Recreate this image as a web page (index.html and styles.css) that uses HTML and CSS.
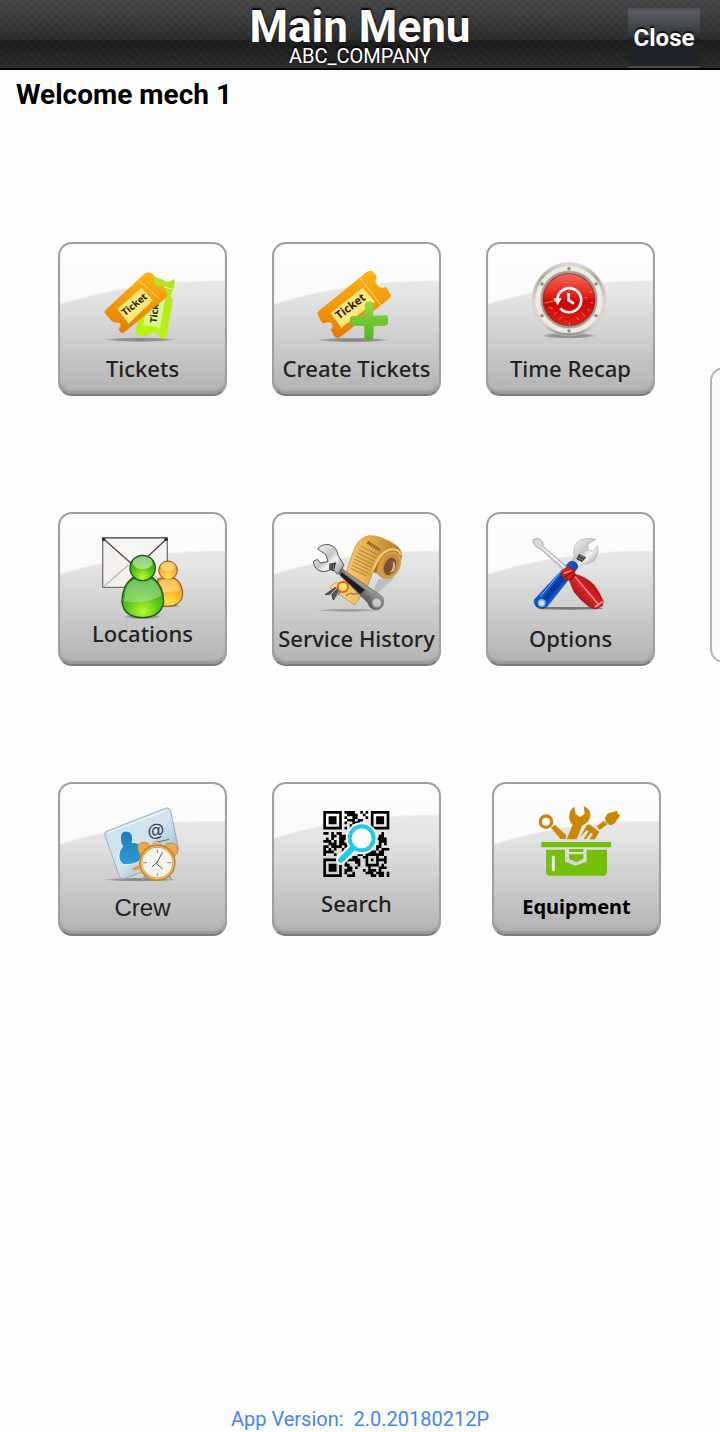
FILE: index.html
```html
<!DOCTYPE html>
<html lang="en">
<head>
  <meta charset="UTF-8">
  <meta name="viewport" content="width=device-width, initial-scale=1.0">
  <title>Main Menu</title>
  <link rel="stylesheet" href="styles.css">
</head>
<body>
  <header class="topbar">
    <div class="heading">
      <h1>Main Menu</h1>
      <p>ABC_COMPANY</p>
    </div>
    <button type="button" class="close">Close</button>
  </header>

  <main>
    <h2 class="welcome">Welcome mech 1</h2>

    <nav class="menu">
      <button type="button" class="tile">
        <svg class="art" viewBox="30 27 495 330" aria-hidden="true">
          <defs>
            <linearGradient id="orange" x1="0" y1="0" x2="0" y2="1">
              <stop offset="0" stop-color="#ffb516"/><stop offset="1" stop-color="#e57b00"/>
            </linearGradient>
            <linearGradient id="lime" x1="0" y1="0" x2="0" y2="1">
              <stop offset="0" stop-color="#b5df2b"/><stop offset="1" stop-color="#b9f50b"/>
            </linearGradient>
            <radialGradient id="shadow">
              <stop offset="0" stop-color="#808080"/><stop offset=".7" stop-color="#999"/><stop offset="1" stop-color="#aaa" stop-opacity="0"/>
            </radialGradient>
          </defs>
          <ellipse cx="270" cy="314" rx="112" ry="7" fill="url(#shadow)"/>
          <path d="M314 125L341 136Q356 146 371 132L374 136L372 160L364 174L363 187L369 194L349 306L344 312L333 309Q326 293 311 294Q298 294 290 301Q280 309 266 300L255 296L290 150Z" fill="url(#lime)"/>
          <path d="M320 180L350 168L330 278L279 270L290 225Z" fill="#dff58c"/>
          <path d="M338 155L371 163" stroke="#e4f79a" stroke-width="3"/>
          <text class="stub" transform="translate(320 265) rotate(-84)">Ticket</text>
          <path d="M167 225L281 119Q292 109 302 115Q313 119 314 128Q305 141 316 151Q326 160 338 153L352 179Q353 185 346 190L224 291Q215 296 209 288Q204 284 211 275Q214 263 203 262Q194 264 184 257L164 233Q164 228 167 225Z" fill="url(#orange)" stroke="#f08d00"/>
          <path d="M202 222L274 159L309 196L236 266Z" fill="#ffe779"/>
          <path d="M263 133L328 191" stroke="#ffd673" stroke-width="3"/>
          <text class="stub" transform="translate(225 244) rotate(-39)">Ticket</text>
        </svg>
        <span class="label">Tickets</span>
      </button>

      <button type="button" class="tile">
        <svg class="art" viewBox="27 27 495 330" aria-hidden="true">
          <defs>
            <linearGradient id="plus" x1="0" y1="0" x2="0" y2="1">
              <stop offset="0" stop-color="#8fdc3d"/><stop offset="1" stop-color="#55b424"/>
            </linearGradient>
          </defs>
          <ellipse cx="265" cy="315" rx="110" ry="7" fill="url(#shadow)"/>
          <path d="M161 229L306 111Q316 106 323 110L331 120Q337 126 331 136Q330 148 342 156Q353 162 363 157L377 180Q378 187 371 192L224 307Q216 312 210 306L198 285Q207 274 200 264Q189 258 179 264Q171 266 168 258L158 236Q157 232 161 229Z" fill="url(#orange)" stroke="#f08d00"/>
          <path d="M197 234L294 158L330 201L229 278Z" fill="#ffe779"/>
          <path d="M286 131L348 210" stroke="#ffe08c" stroke-width="3"/>
          <text class="stub large" transform="translate(222 254) rotate(-37)">Ticket</text>
          <path d="M304 202Q313 196 323 202Q326 205 325 212L325 242L363 241Q369 243 369 250L369 264Q368 271 362 272L326 273L325 307Q324 315 316 315L305 315Q298 314 298 307L298 273L262 272Q255 271 255 264L255 249Q256 244 262 243L299 242L299 211Q299 205 304 202Z" fill="url(#plus)"/>
        </svg>
        <span class="label">Create Tickets</span>
      </button>

      <button type="button" class="tile">
        <svg class="art" viewBox="24 27 495 330" aria-hidden="true">
          <defs>
            <linearGradient id="bezel" x1="0" y1="0" x2="0" y2="1">
              <stop offset="0" stop-color="#e4e1dd"/><stop offset=".2" stop-color="#aaa59c"/><stop offset=".5" stop-color="#ddd8d1"/><stop offset=".85" stop-color="#d9d4cd"/><stop offset="1" stop-color="#8e8a84"/>
            </linearGradient>
            <linearGradient id="dial" x1="0" y1="0" x2="0" y2="1">
              <stop offset="0" stop-color="#f2675b"/><stop offset=".4" stop-color="#e3241b"/><stop offset=".55" stop-color="#c90505"/><stop offset="1" stop-color="#de2019"/>
            </linearGradient>
          </defs>
          <ellipse cx="267" cy="302" rx="85" ry="9" fill="url(#shadow)"/>
          <circle cx="267" cy="193" r="110" fill="url(#bezel)" stroke="#c9c5bf" stroke-width="2"/>
          <circle cx="267" cy="194" r="94" fill="none" stroke="#eeebe6" stroke-width="13"/>
          <circle cx="267" cy="194" r="82" fill="#8b3029" stroke="#a29b91" stroke-width="6"/>
          <circle cx="267" cy="194" r="77" fill="url(#dial)"/>
          <path d="M194 204L225 197M206 217l12 4M218 157l8 5M302 136l4 6M323 153l4 4M329 172l8-3M331 202l8 2M323 221l5 7M304 233l12 12M291 247l5 8M268 262v9M238 253l6-7M222 238l8-6M314 188l8 1" fill="none" stroke="#f07a6a" stroke-width="3"/>
          <g fill="#888">
            <circle cx="267" cy="101" r="5"/><circle cx="186" cy="147" r="5"/><circle cx="348" cy="147" r="5"/>
            <circle cx="186" cy="242" r="5"/><circle cx="348" cy="242" r="5"/><circle cx="267" cy="288" r="5"/>
          </g>
          <path d="M232 191A36 36 0 1 1 241 220M266 174V196L282 206" fill="none" stroke="#fff" stroke-width="8"/>
          <path d="M220 190H245L233 211Z" fill="#fff"/>
        </svg>
        <span class="label">Time Recap</span>
      </button>

      <button type="button" class="tile raised">
        <svg class="art" viewBox="30 27 495 315" aria-hidden="true">
          <defs>
            <radialGradient id="green" cx=".5" cy=".85" r=".8">
              <stop offset="0" stop-color="#b6fa2b"/><stop offset=".5" stop-color="#58c51b"/><stop offset="1" stop-color="#2d9618"/>
            </radialGradient>
            <radialGradient id="amber" cx=".5" cy=".85" r=".8">
              <stop offset="0" stop-color="#ffe34c"/><stop offset=".6" stop-color="#ffaf2c"/><stop offset="1" stop-color="#ee9118"/>
            </radialGradient>
          </defs>
          <path d="M158 99H352V247H158Z" fill="#f3f0ed" stroke="#777" stroke-width="4"/>
          <path d="M160 246L235 180M350 246L284 185" stroke="#bbb" stroke-width="4"/>
          <path d="M160 101L258 188L350 101" fill="#f8f6f4" stroke="#444" stroke-width="4"/>
          <path d="M157 98H352" stroke="#666" stroke-width="4"/>
          <circle cx="161" cy="103" r="5" fill="#222"/><circle cx="348" cy="103" r="5" fill="#222"/>
          <ellipse cx="278" cy="335" rx="60" ry="8" fill="url(#shadow)"/>
          <ellipse cx="350" cy="302" rx="42" ry="6" fill="url(#shadow)"/>
          <path d="M324 222Q352 212 379 222Q398 238 398 270Q394 303 352 304Q317 304 315 272Q313 240 324 222Z" fill="url(#amber)" stroke="#805019" stroke-width="3"/>
          <circle cx="354" cy="196" r="28" fill="url(#amber)" stroke="#805019" stroke-width="3"/>
          <ellipse cx="354" cy="184" rx="21" ry="14" fill="#ffe6a0" opacity=".65"/>
          <path d="M321 258Q347 267 391 256Q387 233 374 224Q352 216 331 227Q321 236 321 258Z" fill="#ffdf8a" opacity=".6"/>
          <path d="M246 219Q278 208 310 219Q340 243 341 290Q335 336 278 338Q220 336 216 289Q217 241 246 219Z" fill="url(#green)" stroke="#205518" stroke-width="4"/>
          <path d="M225 270Q223 240 251 224Q278 215 306 224Q331 240 334 272Q280 300 222 288Z" fill="#b9e8ad" opacity=".5"/>
          <circle cx="278" cy="189" r="38" fill="url(#green)" stroke="#205518" stroke-width="4"/>
          <ellipse cx="278" cy="173" rx="30" ry="19" fill="#d5f3ca" opacity=".6"/>
        </svg>
        <span class="label">Locations</span>
      </button>

      <button type="button" class="tile">
        <svg class="art" viewBox="27 27 495 330" aria-hidden="true">
          <defs>
            <linearGradient id="paper" x1="0" y1="0" x2="1" y2="0">
              <stop offset="0" stop-color="#ffdf93"/><stop offset=".5" stop-color="#e9b34f"/><stop offset="1" stop-color="#b47827"/>
            </linearGradient>
            <linearGradient id="steel" x1="0" y1="0" x2="1" y2="1">
              <stop offset="0" stop-color="#fff"/><stop offset=".45" stop-color="#c6c6c6"/><stop offset=".6" stop-color="#f4f4f4"/><stop offset="1" stop-color="#888"/>
            </linearGradient>
            <linearGradient id="handle" x1="0" y1="1" x2="1" y2="0">
              <stop offset=".3" stop-color="#333"/><stop offset=".55" stop-color="#888"/><stop offset="1" stop-color="#ddd"/>
            </linearGradient>
          </defs>
          <ellipse cx="250" cy="316" rx="100" ry="5" fill="url(#shadow)" opacity=".7"/>
          <path d="M340 222L392 215L310 290Z" fill="#999" opacity=".45"/>
          <path d="M312 92Q350 90 397 124Q418 142 405 171Q394 211 377 219Q350 224 336 204L324 200L306 247L269 300L194 247L209 234L235 232L262 147Q276 99 312 92Z" fill="url(#paper)" stroke="#bd842f" stroke-width="2"/>
          <path d="M324 200Q336 150 372 134Q400 128 407 150" fill="none" stroke="#f0cb7c" stroke-width="6"/>
          <path d="M324 200L336 204Q338 170 352 152Z" fill="#a8702a"/>
          <ellipse cx="377" cy="180" rx="27" ry="38" transform="rotate(22 377 180)" fill="#c78c3c" stroke="#d9a04a" stroke-width="5"/>
          <ellipse cx="375" cy="184" rx="17" ry="27" transform="rotate(22 375 184)" fill="#795033"/>
          <path d="M373 204Q388 190 383 168Q397 178 386 198Z" fill="#d3bb9d"/>
          <path d="M308 112L345 136" stroke="#765a30" stroke-width="9" stroke-dasharray="5 2"/>
          <path d="M288 124L337 149M282 134L333 159M277 144L329 169M272 153L325 179M268 162L321 188M264 171L317 197M261 181L313 207M258 191L306 213" stroke="#a9803d" stroke-width="3"/>
          <path d="M211 247L180 269L200 267L205 285L234 252" fill="#555" stroke="#444" stroke-width="3"/>
          <path d="M215 250L190 275M227 252L211 280" stroke="#ccc" stroke-width="3"/>
          <path d="M244 272q12-11 20-5q14 2 17-7" fill="none" stroke="#a97634" stroke-width="4"/>
          <circle cx="234" cy="246" r="15" fill="#ffe56c" stroke="#ef6411" stroke-width="6"/>
          <path d="M216 188Q230 184 239 197L346 270Q361 282 354 301Q346 317 326 313Q314 311 307 292L224 210Z" fill="url(#handle)" stroke="#666" stroke-width="2"/>
          <path d="M229 201L300 255L285 266L226 211Z" fill="#1d1d1d"/>
          <path d="M240 201L324 264" stroke="#aaa" stroke-width="3"/>
          <circle cx="336" cy="293" r="15" fill="#cacaca" stroke="#888" stroke-width="5"/>
          <path d="M158 132Q170 116 192 119Q216 125 219 151L237 181L218 208L202 191Q178 207 157 194Q145 183 145 169L157 163L167 174L189 170L182 148L171 141Z" fill="url(#steel)" stroke="#555" stroke-width="3"/>
          <path d="M193 176l20-4l-6 27l-14-5Z" fill="#262b31"/><path d="M198 177v17M205 175v20" stroke="#bbb" stroke-width="2"/>
        </svg>
        <span class="label">Service History</span>
      </button>

      <button type="button" class="tile">
        <svg class="art" viewBox="24 27 495 330" aria-hidden="true">
          <defs>
            <linearGradient id="blue" x1="0" y1="0" x2="1" y2="1">
              <stop offset="0" stop-color="#3a86e8"/><stop offset=".5" stop-color="#0750c4"/><stop offset="1" stop-color="#2f78dc"/>
            </linearGradient>
            <linearGradient id="red" x1="0" y1="1" x2="1" y2="0">
              <stop offset=".2" stop-color="#8d0a0e"/><stop offset=".5" stop-color="#d92428"/><stop offset=".8" stop-color="#9d090e"/>
            </linearGradient>
          </defs>
          <path d="M188 306H354L370 312Q270 317 175 312Z" fill="#777"/>
          <path d="M283 157Q276 119 301 105Q325 96 348 103L323 118L325 134L337 139L353 122Q358 147 342 167Q324 180 305 177L292 188L274 170Z" fill="url(#steel)" stroke="#aaa" stroke-width="2"/>
          <path d="M297 147l22 10l-13 15l-17-10Z" fill="#444"/><path d="M296 159l13 7M300 152l12 6" stroke="#aaa" stroke-width="2"/>
          <path d="M268 171Q278 164 289 174Q297 182 291 191L202 304Q191 315 174 308Q160 300 163 284Z" fill="url(#blue)" stroke="#164a9f" stroke-width="2"/>
          <path d="M248 205L188 281L203 286L260 216Z" fill="#063a9c"/>
          <path d="M182 274L249 192" stroke="#7bc0ff" stroke-width="3"/>
          <circle cx="185" cy="294" r="10" fill="#ddd" stroke="#69adf2" stroke-width="4"/>
          <path d="M160 103L175 100L188 111L189 124L260 185L251 194L181 132L166 124L159 112Z" fill="#d8d8d8" stroke="#888" stroke-width="2"/>
          <path d="M185 125L255 188" stroke="#fff" stroke-width="3"/>
          <path d="M246 197L266 184L282 194L285 208Q320 217 342 240Q359 263 370 289L367 303L346 312L330 307Q298 284 281 258L268 226L251 222L243 209Z" fill="url(#red)" stroke="#9e1015" stroke-width="2"/>
          <path d="M285 215L354 297M251 205L275 197" stroke="#ff9a91" stroke-width="4"/>
          <path d="M252 218L277 201M269 227L284 208" stroke="#5c0308" stroke-width="3"/>
          <path d="M345 306L369 289" stroke="#f8a4a0" stroke-width="5"/>
        </svg>
        <span class="label">Options</span>
      </button>

      <button type="button" class="tile">
        <svg class="art" viewBox="30 27 495 330" aria-hidden="true">
          <defs>
            <linearGradient id="card" x1="0" y1="0" x2="1" y2="1">
              <stop offset="0" stop-color="#c5dfee"/><stop offset=".5" stop-color="#d3e4ef"/><stop offset="1" stop-color="#86abc1"/>
            </linearGradient>
            <linearGradient id="person" x1="0" y1="0" x2="0" y2="1">
              <stop offset="0" stop-color="#2479b9"/><stop offset="1" stop-color="#2c9bd6"/>
            </linearGradient>
          </defs>
          <ellipse cx="271" cy="314" rx="112" ry="6" fill="url(#shadow)"/>
          <path d="M164 178Q163 170 172 168L349 99Q359 97 362 107L385 220L365 260L222 311Q214 313 209 306Z" fill="url(#card)" stroke="#94afbd" stroke-width="3"/>
          <path d="M174 173L349 106" stroke="#edf7fc" stroke-width="4"/>
          <path d="M211 191Q210 173 224 168Q241 167 247 181Q250 193 246 203Q263 200 273 215L271 257Q247 272 219 268Q205 258 207 238Q208 224 218 214Q211 205 211 191Z" fill="url(#person)" stroke="#e7f4fa" stroke-width="3"/>
          <text class="at" transform="translate(295 187) rotate(-8)">@</text>
          <path d="M323 201L357 193" stroke="#65747d" stroke-width="3"/>
          <path d="M245 280l24-10l7 8l-25 9Z" fill="#ee9d2d"/>
          <path d="M286 302l-8 14M357 302l9 14" stroke="#999" stroke-width="5"/>
          <path d="M263 224Q260 201 284 202Q297 203 301 214L272 242ZM341 215Q350 202 365 204Q384 208 384 224Q384 238 373 244Z" fill="#e9aa4d" stroke="#b9761d" stroke-width="2"/>
          <path d="M307 208Q320 189 334 208" fill="#e8bb77" stroke="#ba7e31" stroke-width="2"/>
          <circle cx="322" cy="263" r="50" fill="#f5f3ee" stroke="#c88327" stroke-width="10"/>
          <circle cx="322" cy="263" r="48" fill="none" stroke="#efbe70" stroke-width="4"/>
          <path d="M322 223v11M322 294v10M280 263h11M352 263h11" stroke="#888" stroke-width="3"/>
          <path d="M337 232L320 266L338 282M324 259L306 276" fill="none" stroke="#555" stroke-width="3"/>
        </svg>
        <span class="label plain">Crew</span>
      </button>

      <button type="button" class="tile raised high-gloss">
        <svg class="art" viewBox="27 27 495 315" aria-hidden="true">
          <!-- 25 x 25 code, one unit per module -->
          <g transform="translate(175 108) scale(7.92)">
            <path d="M.5 .5h6v6h-6zM18.5 .5h6v6h-6zM.5 18.5h6v6h-6z" fill="none" stroke="#000"/>
            <path d="M2 2h3v3h-3zM20 2h3v3h-3zM2 20h3v3h-3z"/>
            <path d="M8 .5h4m2 0h1m1 0h1M9 1.5h4m2 0h1M8 2.5h1m2 0h2m3 0h1M9 3.5h3m1 0h2M8 4.5h1m2 0h3M10 5.5h1m2 0h3M8 6.5h1m1 0h1m1 0h1m1 0h1m1 0h1M0 8.5h2m1 0h1m1 0h2m4 0h2m2 0h3m4 0h1M3 9.5h2m1 0h3m2 0h2m8 0h2M1 10.5h1m1 0h1m2 0h3m11 0h4M0 11.5h3m1 0h1m1 0h2m13 0h3M2 12.5h3m1 0h3m12 0h1m1 0h1M0 13.5h2m1 0h4m1 0h2m10 0h2M0 14.5h1m1 0h1m1 0h1m2 0h1m12 0h1m1 0h3M0 15.5h4m3 0h2m8 0h3m1 0h2M0 16.5h1m3 0h1m8 0h2m1 0h7M11 17.5h2m2 0h2m3 0h1m2 0h1M9 18.5h5m2 0h1m1 0h1m1 0h4M8 19.5h1m3 0h2m2 0h1m3 0h1m2 0h1M8 20.5h2m3 0h1m2 0h5m1 0h1M9 21.5h2m1 0h1m4 0h1m3 0h3M8 22.5h3m4 0h1m1 0h3m1 0h1M8 23.5h1m2 0h1m4 0h3m1 0h3m1 0h1M9 24.5h3m6 0h2m1 0h2m1 0h1" fill="none" stroke="#000"/>
          </g>
          <path d="M228 255L264 219" stroke="#fff" stroke-width="30" stroke-linecap="round"/>
          <circle cx="290" cy="190" r="48" fill="#fff"/>
          <path d="M228 255L264 219" stroke="#20cbe3" stroke-width="18" stroke-linecap="round"/>
          <circle cx="290" cy="190" r="36" fill="#fff" stroke="#20cbe3" stroke-width="12"/>
        </svg>
        <span class="label">Search</span>
      </button>

      <button type="button" class="tile last">
        <svg class="art" viewBox="27 27 495 330" aria-hidden="true">
          <g fill="#cb8706">
            <circle cx="183" cy="140" r="17" fill="none" stroke="#cb8706" stroke-width="10"/>
            <path d="M198 158L210 149L243 180V192H226Z"/>
            <path d="M268 96L272 118L286 126L299 116L296 93Q317 101 316 124Q313 143 291 152L275 193H245L263 149Q250 138 253 119Q255 102 268 96Z"/>
            <path d="M286 186L304 152Q311 145 320 153L343 170L330 193H313L324 178L317 173L304 192H296L311 169L305 165Z"/>
            <path d="M335 154L357 137L367 148L344 165Z"/>
            <path d="M360 130Q364 114 380 112L396 107L398 115L406 122L396 134Q389 151 373 150L363 142Z"/>
          </g>
          <path d="M169 201H378V217H169ZM183 224H240V260L272 272L305 260V224H366V291Q366 302 354 302H196Q183 302 183 291Z" fill="#75bf08"/>
          <path d="M252 222H295V231H252ZM252 238H295V251L274 262L252 251Z" fill="#75bf08"/>
          <path d="M205 246V284" stroke="#eee" stroke-width="9" stroke-linecap="round"/>
        </svg>
        <span class="label strong">Equipment</span>
      </button>
    </nav>
  </main>

  <footer>App Version:&nbsp; 2.0.20180212P</footer>

  <div class="drawer"></div>
</body>
</html>
```
FILE: styles.css
```css
* {
  box-sizing: border-box;
}
body {
  margin: 0;
  min-height: 100vh;
  display: flex;
  flex-direction: column;
  font-family: Roboto, Arial, sans-serif;
  background: #fefefe;
  color: #000;
}
h1, h2, p {
  margin: 0;
}
.topbar {
  display: grid;
  grid-template-columns: 1fr auto 1fr;
  height: 70px;
  padding: 0 20px;
  border-bottom: 2px solid #000;
  background:
    repeating-linear-gradient(45deg, rgba(255, 255, 255, 0.02) 0 3px, transparent 3px 6px),
    repeating-linear-gradient(-45deg, rgba(0, 0, 0, 0.06) 0 3px, transparent 3px 6px),
    linear-gradient(#484848, #2d2d2d 39px, #1c1c1c 41px, #2b2b2b);
  color: #fff;
}
.heading {
  grid-column: 2;
  text-align: center;
  text-shadow: 0 -2px 2px #000;
}
.heading h1 {
  font-size: 44px;
  line-height: 46px;
  padding-top: 4px;
}
.heading p {
  font-size: 20px;
  line-height: 12px;
}
.close {
  justify-self: end;
  width: 72px;
  height: 60px;
  margin-top: 8px;
  padding: 2px 0 0;
  border: 0;
  border-bottom: 2px solid #4a4a4a;
  background: linear-gradient(#4b4e53, #5a5d61 4px, #30353b 28px, #1c2127 31px, #20252b);
  color: #fff;
  font-family: inherit;
  font-size: 24px;
  font-weight: bold;
  text-shadow: 0 -2px 1px #111;
  cursor: pointer;
}
main {
  flex: 1;
}
.welcome {
  padding: 9px 16px 7px;
  font-size: 28px;
  line-height: 32px;
}
.menu {
  display: grid;
  grid-template-columns: 169px 169px 175px;
  justify-content: center;
  column-gap: 45px;
  row-gap: 116px;
  padding: 124px 1px 124px 0;
}
.tile {
  --gloss: 228px;
  display: flex;
  flex-direction: column;
  align-items: center;
  width: 169px;
  height: 154px;
  padding: 0;
  border: 2px solid #a0a0a0;
  border-bottom-color: #7c7c7c;
  border-radius: 14px;
  background:
    radial-gradient(330px 190px at 160px var(--gloss), transparent 99%, rgba(255, 255, 255, 0.85) 100%),
    linear-gradient(#f4f4f4, #e2e2e2 38%, #b4b4b4 96%);
  background-origin: border-box;
  box-shadow: inset 0 -4px 2px -1px #999;
  cursor: pointer;
}
.high-gloss {
  --gloss: 222px;
}
.last {
  justify-self: end;
}
.art {
  width: 100%;
  height: 110px;
}
.raised .art {
  height: 105px;
}
.label {
  font-family: "Noto Sans", sans-serif;
  font-size: 22px;
  font-weight: 500;
  line-height: 28px;
  color: #222;
  white-space: nowrap;
}
.plain {
  font-family: "Liberation Sans", Arial, sans-serif;
  font-size: 24px;
}
.strong {
  font-size: 20px;
  line-height: 26px;
  font-weight: bold;
  color: #000;
}
.stub {
  font-family: "Open Sans", sans-serif;
  font-size: 29px;
  font-weight: bold;
  fill: #221;
}
.large {
  font-size: 34px;
}
.at {
  font-family: "Liberation Sans", Arial, sans-serif;
  font-size: 52px;
  font-weight: bold;
  fill: #39424a;
}
footer {
  padding: 0 16px 1px;
  text-align: center;
  font-size: 20px;
  line-height: 24px;
  color: #4286f5;
}
/* edge handle, its right half stays off screen */
.drawer {
  position: fixed;
  top: 367px;
  right: -20px;
  width: 30px;
  height: 296px;
  border: 2px solid #b5b5b5;
  border-radius: 14px;
  background: #fafafa;
}
```
